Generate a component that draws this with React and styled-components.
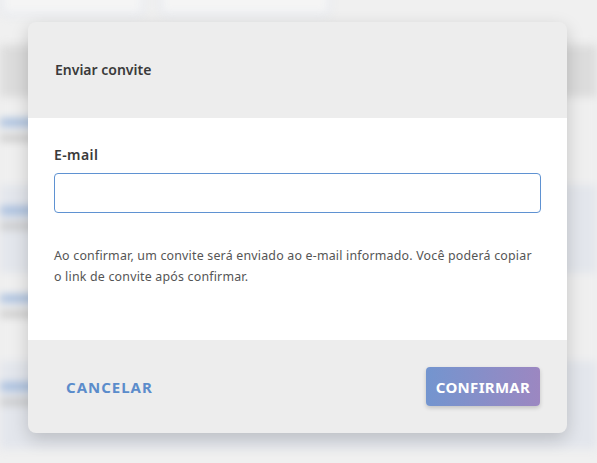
import React from "react";
import styled, { createGlobalStyle } from "styled-components";

const GlobalStyle = createGlobalStyle`
  html, body {
    margin: 0;
    padding: 0;
    background: #f0f0f0;
    font-family: "Noto Sans", Lato, sans-serif;
  }
  * { box-sizing: border-box; }
`;

const Screen = styled.div`
  position: relative;
  width: 597px;
  height: 463px;
  overflow: hidden;
  background: #f0f0f0;
`;

const Backdrop = styled.div`
  filter: blur(4px);
  display: flex;
  flex-direction: column;
`;

const FilterBar = styled.div`
  display: flex;
  gap: 14px;
  margin-top: -20px;
  height: 65px;
`;

const FakeInput = styled.div`
  width: ${(p) => p.w}px;
  height: 34px;
  border-radius: 8px;
  border: 3px solid #e2e6ee;
  background: #f5f5f5;
  margin-top: 2px;
`;

const TableHead = styled.div`
  height: 52px;
  background: #dcdcdc;
`;

const Row = styled.div`
  height: 88px;
  padding: 22px 0 0 0;
  background: ${(p) => (p.alt ? "#e3e6ec" : "#efefef")};
  display: flex;
  flex-direction: column;
  gap: 9px;
`;

const RowLink = styled.div`
  width: 60px;
  height: 7px;
  background: #9ab5db;
`;

const RowSub = styled.div`
  width: 44px;
  height: 6px;
  background: #c4c4c4;
`;

const Modal = styled.div`
  position: absolute;
  left: 28px;
  top: 22px;
  width: 539px;
  border-radius: 8px;
  overflow: hidden;
  background: #ededed;
  box-shadow: 0 6px 18px rgba(0, 0, 0, 0.18);
  display: flex;
  flex-direction: column;
`;

const Header = styled.div`
  height: 96px;
  padding: 0 27px 1px 27px;
  display: flex;
  align-items: center;
  font-size: 14px;
  font-weight: 600;
  color: #3a3a3a;
`;

const Body = styled.div`
  background: #ffffff;
  height: 222px;
  padding: 27px 26px 0 26px;
  display: flex;
  flex-direction: column;
`;

const Label = styled.label`
  font-size: 14px;
  font-weight: 600;
  color: #3a3a3a;
  line-height: 20px;
  letter-spacing: 0.4px;
  margin-bottom: 8px;
`;

const Input = styled.input`
  height: 40px;
  width: 100%;
  border: 1px solid #5f92d2;
  border-radius: 4px;
  outline: none;
  font-family: inherit;
  font-size: 14px;
  padding: 0 12px;
`;

const Help = styled.p`
  margin: 32px 0 0 0;
  font-size: 12.4px;
  line-height: 21px;
  letter-spacing: 0.2px;
  color: #555555;
`;

const Footer = styled.div`
  height: 93px;
  padding: 0 27px 0 26px;
  display: flex;
  align-items: center;
  justify-content: space-between;
`;

const TextButton = styled.button`
  border: none;
  background: transparent;
  font-family: inherit;
  font-size: 15px;
  font-weight: 700;
  letter-spacing: 1px;
  color: #5b8ccb;
  padding: 0 12px;
  height: 38px;
`;

const PrimaryButton = styled.button`
  border: none;
  border-radius: 4px;
  background: linear-gradient(90deg, #7395cf 0%, #9c87c1 100%);
  color: #ffffff;
  font-family: inherit;
  font-size: 15px;
  font-weight: 700;
  letter-spacing: 0.3px;
  height: 39px;
  width: 114px;
  padding: 0;
  box-shadow: 0 2px 4px rgba(0, 0, 0, 0.18);
`;

const rows = [false, true, false, true];

export default function App() {
  return (
    <>
      <GlobalStyle />
      <Screen>
        <Backdrop>
          <FilterBar>
            <FakeInput w={145} />
            <FakeInput w={172} />
          </FilterBar>
          <TableHead />
          {rows.map((alt, i) => (
            <Row key={i} alt={alt}>
              <RowLink />
              <RowSub />
            </Row>
          ))}
        </Backdrop>
        <Modal>
          <Header>Enviar convite</Header>
          <Body>
            <Label htmlFor="email">E-mail</Label>
            <Input id="email" type="email" />
            <Help>
              Ao confirmar, um convite será enviado ao e-mail informado. Você poderá copiar
              o link de convite após confirmar.
            </Help>
          </Body>
          <Footer>
            <TextButton>CANCELAR</TextButton>
            <PrimaryButton>CONFIRMAR</PrimaryButton>
          </Footer>
        </Modal>
      </Screen>
    </>
  );
}
